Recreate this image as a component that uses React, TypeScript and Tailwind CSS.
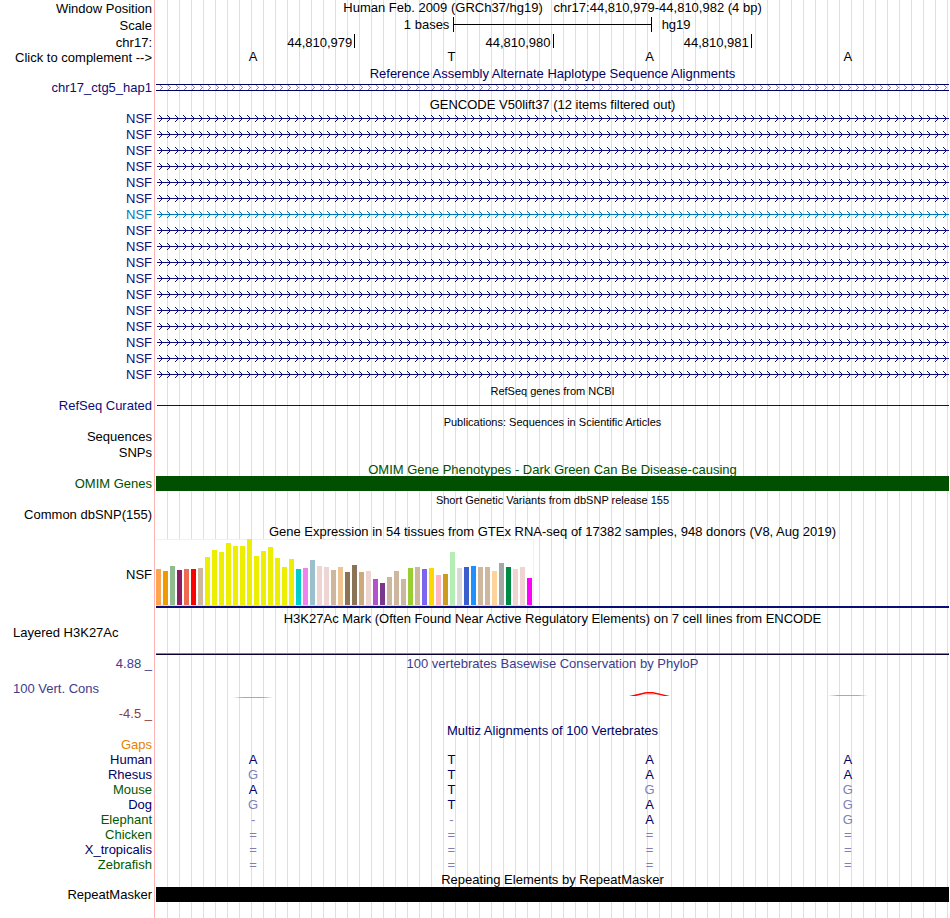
import type { ReactNode } from "react";
import clsx from "clsx";

const NAVY = "#0c0c78";

const transcripts = Array.from({ length: 17 }, (_, i) => (i === 6 ? "#0077b8" : NAVY));

const tissues: [string, number][] = [
  ["#ffa54f", 36], ["#ee9a00", 34], ["#8fbc8f", 39], ["#8b1c62", 35], ["#ee6a50", 36], ["#ff0000", 36],
  ["#cdb79e", 37], ["#eeee00", 48], ["#eeee00", 55], ["#eeee00", 53], ["#eeee00", 62], ["#eeee00", 59],
  ["#eeee00", 59], ["#eeee00", 66], ["#eeee00", 49], ["#eeee00", 54], ["#eeee00", 58], ["#eeee00", 47],
  ["#eeee00", 38], ["#eeee00", 46], ["#00cdcd", 36], ["#ee82ee", 37], ["#9ac0cd", 45], ["#eed5d2", 39],
  ["#eed5d2", 38], ["#cdb79e", 35], ["#eec591", 38], ["#8b7355", 33], ["#8b7355", 40], ["#cdaa7d", 33],
  ["#eed5d2", 34], ["#b452cd", 26], ["#7a378b", 22], ["#cdb79e", 28], ["#cdb79e", 34], ["#cdb79e", 26],
  ["#9acd32", 37], ["#cdb79e", 38], ["#7a67ee", 36], ["#ffd700", 37], ["#ffb6c1", 30], ["#cd9b1d", 31],
  ["#b4eeb4", 53], ["#d9d9d9", 37], ["#3a5fcd", 38], ["#1e90ff", 39], ["#cdb79e", 38], ["#cdb79e", 38],
  ["#ffd39b", 34], ["#a6a6a6", 42], ["#008b45", 38], ["#eed5d2", 36], ["#eed5d2", 38], ["#ff00ff", 27],
];

const species = [
  { name: "Human", tone: "text-[#000064]", bases: "ATAA" },
  { name: "Rhesus", tone: "text-[#000064]", bases: "GTAA" },
  { name: "Mouse", tone: "text-[#005a00]", bases: "ATGG" },
  { name: "Dog", tone: "text-[#000064]", bases: "GTAG" },
  { name: "Elephant", tone: "text-[#005a00]", bases: "--AG" },
  { name: "Chicken", tone: "text-[#005a00]", bases: "====" },
  { name: "X_tropicalis", tone: "text-[#000064]", bases: "====" },
  { name: "Zebrafish", tone: "text-[#005a00]", bases: "====" },
];

interface RowProps {
  label?: string;
  height: string;
  tone?: string;
  left?: boolean;
  middle?: boolean;
  children?: ReactNode;
}

function Row({ label, height, tone, left, middle, children }: RowProps) {
  return (
    <div className={clsx("grid grid-cols-[156px_minmax(0,1fr)]", height)}>
      <div
        className={clsx(
          "flex whitespace-nowrap",
          left ? "justify-start pl-[13px]" : "justify-end pr-1",
          middle ? "items-center" : "items-start",
          tone,
        )}
      >
        {label}
      </div>
      <div className="min-w-0">{children}</div>
    </div>
  );
}

interface TitleProps {
  children: ReactNode;
  tone?: string;
  small?: boolean;
  height?: string;
}

function Title({ children, tone, small, height = "h-[14px]" }: TitleProps) {
  return (
    <Row height={height}>
      <h2 className={clsx("whitespace-nowrap text-center", small && "text-[11px] leading-[19px]", tone)}>
        {children}
      </h2>
    </Row>
  );
}

function Bases({ bases, refs }: { bases: string; refs?: string }) {
  return (
    <div className="grid grid-cols-4">
      {bases.split("").map((base, i) => (
        <span
          key={i}
          className={clsx("pr-1 text-center", refs && (base === refs[i] ? "text-[#000064]" : "text-[#8080b4]"))}
        >
          {base}
        </span>
      ))}
    </div>
  );
}

// Direction chevrons repeat every 8px for as far as the track reaches
function chevronPath(size: number, x: number, y: number) {
  const dots = Array.from({ length: size * 2 - 1 }, (_, i) => [x + Math.min(i, size * 2 - 2 - i), y + i]);
  return Array.from({ length: 400 }, (_, n) =>
    dots.map(([dx, dy]) => `M${n * 8 + dx} ${dy}h1v1h-1z`).join(""),
  ).join("");
}

const chevrons = chevronPath(4, 3, 0);
const innerChevrons = chevronPath(3, 4, 1);

function Strand({ color }: { color: string }) {
  return (
    <div className="pt-[5px]">
      <svg className="block h-[7px] w-full" shapeRendering="crispEdges">
        <line x1="1" x2="100%" y1="3.5" y2="3.5" stroke={color} />
        <path d={chevrons} fill={color} />
      </svg>
    </div>
  );
}

function HaplotypeStrand() {
  return (
    <div className="pt-[5px]">
      <svg className="block h-[7px] w-full" stroke="#000064" shapeRendering="crispEdges">
        <line x1="0" x2="100%" y1=".5" y2=".5" />
        <line x1="0" x2="100%" y1="6.5" y2="6.5" />
        <path d={innerChevrons} fill="#8080b4" stroke="none" />
      </svg>
    </div>
  );
}

function Expression() {
  return (
    <div className="pt-px">
      <div className="flex h-[67px] w-[378px] items-end gap-[2px] border-b border-r border-[#dcdcdc] border-r-[#f0f0f0] bg-white shadow-[inset_0_1px_#f0f0f0]">
        {tissues.map(([color, value], i) => (
          <div key={i} className="w-[5px] shrink-0" style={{ height: value, backgroundColor: color }} />
        ))}
      </div>
      <div className="h-[2px] bg-[#0c0c78]" />
    </div>
  );
}

function Conservation() {
  return (
    <div className="grid grid-cols-4 pt-[11px]">
      <svg className="mx-auto h-[7px] w-12 pr-1" viewBox="0 0 44 7">
        <path d="M2 6.5L12 6h20l10 .5l-10 .5h-20z" fill="#f08c8c" />
      </svg>
      <span />
      <svg className="mx-auto h-[7px] w-12 pr-1" viewBox="0 0 44 7">
        <path d="M1 5L18 1h7L42 5h-6L25 2.6h-7L8 5z" fill="#ff0000" />
        <path d="M16 3.5h12" stroke="#ff9696" strokeWidth=".5" />
      </svg>
      <svg className="mx-auto h-[7px] w-12 pr-1" viewBox="0 0 44 7">
        <path d="M2 4.5L12 4h20l10 .5l-10 .5h-20z" fill="#f08c8c" />
      </svg>
    </div>
  );
}

export default function App() {
  return (
    <main className="overflow-hidden bg-white bg-[linear-gradient(to_right,#fff_154px,#ffb4b4_154px_155px,#fff_155px_156px,transparent_156px),repeating-linear-gradient(to_right,transparent_0_11px,#dcdcf5_11px_12px)] pb-4 pr-px font-['Liberation_Sans',Arial,sans-serif] text-[13px] leading-[17px] text-black">
      <Row label="Window Position" height="h-[17px]">
        <h1 className="whitespace-pre text-center leading-[15px]">
          Human Feb. 2009 (GRCh37/hg19){"   "}chr17:44,810,979-44,810,982 (4 bp)
        </h1>
      </Row>
      <Row label="Scale" height="h-[17px]">
        <div className="flex leading-[15px]">
          <span className="w-3/8 pr-1 text-right">1 bases</span>
          <div className="flex h-[15px] w-1/4 items-center border-x border-black">
            <div className="h-px w-full bg-black" />
          </div>
          <span className="pl-[10px]">hg19</span>
        </div>
      </Row>
      <Row label="chr17:" height="h-[15px]">
        <div className="grid grid-cols-4 text-right">
          <span className="pr-[2px]">44,810,979</span>
          <span className="h-[14px] border-l border-black pr-[2px]">44,810,980</span>
          <span className="h-[14px] border-l border-black pr-[2px]">44,810,981</span>
          <span className="h-[14px] border-l border-black" />
        </div>
      </Row>
      <Row label="Click to complement -->" height="h-[16px]">
        <div className="leading-[15px]">
          <Bases bases="ATAA" />
        </div>
      </Row>

      <Title tone="text-[#000064]">Reference Assembly Alternate Haplotype Sequence Alignments</Title>
      <Row label="chr17_ctg5_hap1" height="h-[17px]" tone="text-[#0c0c78]">
        <HaplotypeStrand />
      </Row>

      <Title>GENCODE V50lift37 (12 items filtered out)</Title>
      {transcripts.map((color, i) => (
        <Row key={i} label="NSF" height="h-[16px]" tone={color === NAVY ? "text-[#0c0c78]" : "text-[#0077b8]"}>
          <Strand color={color} />
        </Row>
      ))}

      <Title small height="h-[15px]">RefSeq genes from NCBI</Title>
      <Row label="RefSeq Curated" height="h-[16px]" tone="text-[#0c0c78]">
        <div className="pl-px pt-2">
          <div className="h-px bg-[#0c0c78]" />
        </div>
      </Row>

      <Title small height="h-[15px]">Publications: Sequences in Scientific Articles</Title>
      <Row label="Sequences" height="h-[16px]" />
      <Row label="SNPs" height="h-[17px]" />

      <Title tone="text-[#005000]">OMIM Gene Phenotypes - Dark Green Can Be Disease-causing</Title>
      <Row label="OMIM Genes" height="h-[16px]" tone="text-[#005000]">
        <div className="pt-px">
          <div className="h-[15px] bg-[#005000]" />
        </div>
      </Row>

      <Title small height="h-[15px]">Short Genetic Variants from dbSNP release 155</Title>
      <Row label="Common dbSNP(155)" height="h-[17px]" />

      <Title height="h-[15px]">
        Gene Expression in 54 tissues from GTEx RNA-seq of 17382 samples, 948 donors (V8, Aug 2019)
      </Title>
      <Row label="NSF" height="h-[72px]" middle>
        <Expression />
      </Row>

      <Title>H3K27Ac Mark (Often Found Near Active Regulatory Elements) on 7 cell lines from ENCODE</Title>
      <Row label="Layered H3K27Ac" height="h-[31px]" left>
        <div className="flex h-full flex-col justify-end">
          <div className="h-px bg-[#c86478]" />
          <div className="h-px bg-[#0c0032]" />
        </div>
      </Row>

      <Row label="4.88 _" height="h-[25px]" tone="text-[#3c3c8c]">
        <h2 className="whitespace-nowrap text-center text-[#3c3c8c]">
          100 vertebrates Basewise Conservation by PhyloP
        </h2>
      </Row>
      <Row label="100 Vert. Cons" height="h-[25px]" tone="text-[#3c3c8c]" left>
        <Conservation />
      </Row>
      <Row label="-4.5 _" height="h-[17px]" tone="text-[#8c3c3c]" />

      <Title tone="text-[#000064]">Multiz Alignments of 100 Vertebrates</Title>
      <Row label="Gaps" height="h-[15px]" tone="text-[#e68200]" />
      {species.map(({ name, tone, bases }) => (
        <Row key={name} label={name} height="h-[15px]" tone={tone}>
          <Bases bases={bases} refs="ATAA" />
        </Row>
      ))}

      <Title height="h-[15px]">Repeating Elements by RepeatMasker</Title>
      <Row label="RepeatMasker" height="h-[16px]">
        <div className="pt-px">
          <div className="h-[15px] bg-black" />
        </div>
      </Row>
    </main>
  );
}
